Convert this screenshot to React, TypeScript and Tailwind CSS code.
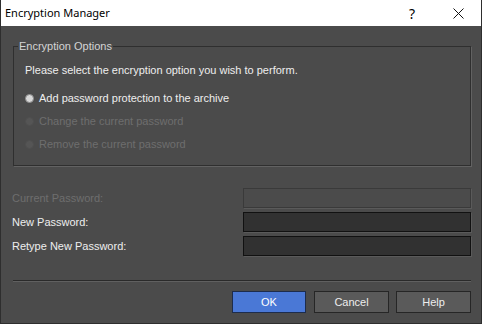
import React from "react";

const font = { fontFamily: "'Liberation Sans', Arial, sans-serif" };

function Radio({ label, checked, disabled }: { label: string; checked?: boolean; disabled?: boolean }) {
  return (
    <div className="flex items-center h-[23px]">
      <span
        className={
          "w-[9px] h-[9px] rounded-full mr-[5px] " +
          (checked ? "bg-[#d8d8d8] border border-[#8a8a8a]" : "bg-[#555555] border border-[#4f4f4f]")
        }
      />
      <span className={disabled ? "text-[#6e6e6e]" : "text-[#eeeeee]"}>{label}</span>
    </div>
  );
}

export default function App() {
  return (
    <div className="w-[482px] h-[324px] flex flex-col bg-[#4b4b4b] border border-[#2e2e2e] border-t-0 text-[11px]" style={font}>
      <div className="h-[26px] bg-white flex items-center justify-between text-black shrink-0" style={{ fontFamily: "'Noto Sans', 'Open Sans', sans-serif" }}>
        <span className="pl-[4px] text-[11px]">Encryption Manager</span>
        <div className="flex items-center">
          <span className="w-[46px] text-center text-[14px]">?</span>
          <span className="w-[46px] flex justify-center">
            <svg width="11" height="11" viewBox="0 0 11 11"><path d="M0.5 0.5 L10.5 10.5 M10.5 0.5 L0.5 10.5" stroke="#111" strokeWidth="1" /></svg>
          </span>
        </div>
      </div>
      <div className="flex-1 flex flex-col pl-[11px] pr-[10px]">
        <div className="relative mt-[20px] ml-[1px] h-[120px] border border-[#2f2f2f] shadow-[1px_1px_0_#626262]">
          <span className="absolute left-[4px] top-[-8px] px-[1px] bg-[#4b4b4b] text-[#d4d4d4] leading-[14px]">Encryption Options</span>
          <div className="pl-[11px] pt-[16px] text-[#eeeeee] leading-[14px]">Please select the encryption option you wish to perform.</div>
          <div className="pl-[11px] pt-[10px]">
            <Radio label="Add password protection to the archive" checked />
            <Radio label="Change the current password" disabled />
            <Radio label="Remove the current password" disabled />
          </div>
        </div>
        <div className="mt-[22px] flex flex-col gap-[4px]">
          <div className="flex items-center justify-between h-[20px]">
            <span className="text-[#6e6e6e]">Current Password:</span>
            <div className="w-[228px] h-[20px] border border-[#3a3a3a] bg-[#4b4b4b] shadow-[1px_1px_0_#5a5a5a]" />
          </div>
          <div className="flex items-center justify-between h-[20px]">
            <span className="text-[#eeeeee]">New Password:</span>
            <div className="w-[228px] h-[20px] border border-[#111111] bg-[#313131] shadow-[1px_1px_0_#5a5a5a]" />
          </div>
          <div className="flex items-center justify-between h-[20px]">
            <span className="text-[#eeeeee]">Retype New Password:</span>
            <div className="w-[228px] h-[20px] border border-[#111111] bg-[#313131] shadow-[1px_1px_0_#5a5a5a]" />
          </div>
        </div>
        <div className="mt-[24px] ml-[1px] h-[1px] bg-[#2a2a2a] shadow-[0_1px_0_#606060]" />
        <div className="mt-[10px] flex justify-end">
          <button className="w-[74px] h-[22px] bg-[#4a78d6] border border-[#1d2c4c] text-white">OK</button>
          <button className="ml-[8px] w-[75px] h-[22px] bg-[#5a5a5a] border border-[#262626] text-[#eeeeee]">Cancel</button>
          <button className="ml-[7px] w-[75px] h-[22px] bg-[#5a5a5a] border border-[#262626] text-[#eeeeee]">Help</button>
        </div>
      </div>
    </div>
  );
}
